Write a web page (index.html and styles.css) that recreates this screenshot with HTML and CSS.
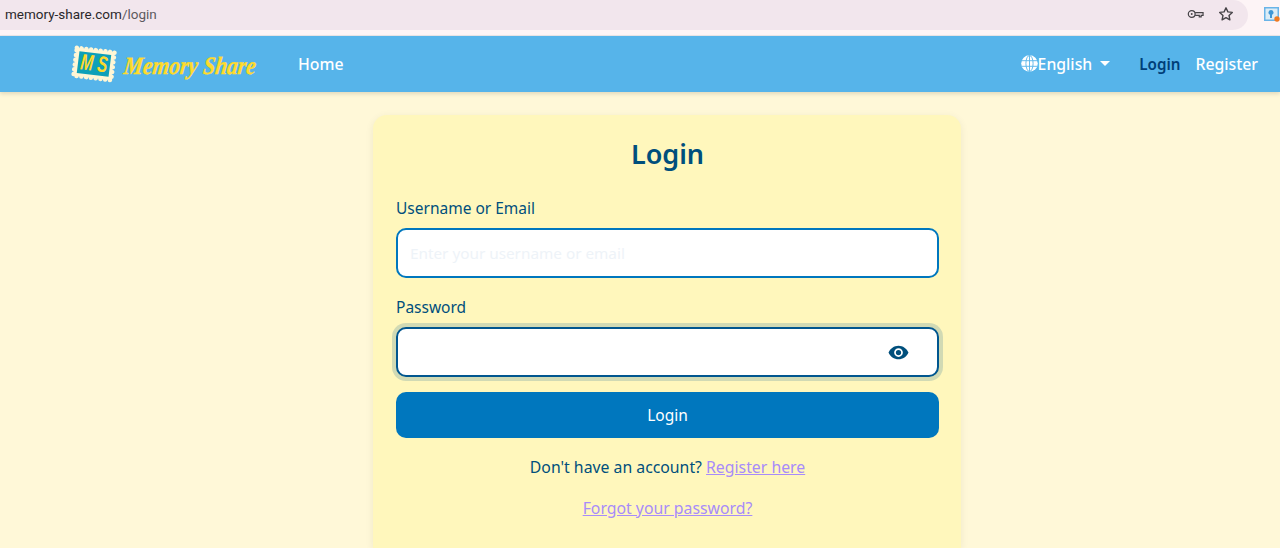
FILE: index.html
```html
<!DOCTYPE html>
<html lang="en">
<head>
  <meta charset="UTF-8">
  <title>Memory Share - Login</title>
  <link rel="stylesheet" href="styles.css">
</head>
<body>
<div class="browser-bar">
  <div class="url-pill">
    <span class="url"><span class="url-host">memory-share.com</span>/login</span>
    <svg class="key-icon" viewBox="0 0 18 10"><circle cx="5" cy="5" r="3.6"/><circle cx="5" cy="5" r="1" class="solid"/><path d="M8.6 3.6H17V6.4H15V8H13V6.4H8.6"/></svg>
    <svg class="star-icon" viewBox="0 0 16 16"><path d="M8 1.8l1.9 4.1 4.4.5-3.3 3 .9 4.4L8 11.6l-3.9 2.2.9-4.4-3.3-3 4.400-.5z"/></svg>
  </div>
  <svg class="ext-icon" viewBox="0 0 16 16">
    <rect width="15" height="14" y="1" fill="#69b4e8"/>
    <rect x="1.500" y="2.500" width="12" height="11" fill="#dcecf6"/>
    <path d="M7 4a2.500 2.500 0 0 1 1 4.800V12H6V8.800A2.500 2.500 0 0 1 7 4z" fill="#3f97d6"/>
    <circle cx="13" cy="13" r="2.700" fill="#f07a22"/>
  </svg>
</div>

<nav class="navbar">
  <a class="brand" href="#">
    <svg class="stamp" viewBox="0 0 46 40">
      <g transform="rotate(7 23 20)">
        <rect x="4" y="6" width="38" height="28" class="perf"/>
        <rect x="4" y="6" width="38" height="28" fill="#fff6d5"/>
        <rect x="7" y="9" width="32" height="22" fill="#0ea0b8"/>
        <text class="stamp-text" transform="translate(23 27) scale(.85 1.25)" text-anchor="middle">M S</text>
      </g>
    </svg>
    <span class="brand-name">Memory Share</span>
  </a>
  <a class="nav-link home" href="#">Home</a>
  <div class="nav-right">
    <a class="lang" href="#">
      <svg class="globe" viewBox="0 0 17 17"><circle cx="8.500" cy="8.500" r="8.300" class="globe-disc"/><ellipse cx="8.500" cy="8.500" rx="3.600" ry="8"/><path d="M.5 5.700h16M.5 11.300h16M8.500 .5v16"/></svg>
      <span>English</span>
      <span class="caret"></span>
    </a>
    <a class="nav-link active" href="#">Login</a>
    <a class="nav-link" href="#">Register</a>
  </div>
</nav>

<main class="page">
  <form class="login-card">
    <h1>Login</h1>
    <label for="username">Username or Email</label>
    <input id="username" class="field" type="text" placeholder="Enter your username or email">
    <label for="password">Password</label>
    <div class="password-wrap">
      <input id="password" class="field focused" type="password">
      <svg class="eye" viewBox="0 0 24 24"><path d="M12 4.200C7 4.200 2.500 7.400.6 12c1.900 4.600 6.400 7.800 11.400 7.800s9.500-3.200 11.400-7.800C21.500 7.400 17 4.200 12 4.200zm0 12.800a5 5 0 1 1 0-10 5 5 0 0 1 0 10zm0-8a3 3 0 1 0 0 6 3 3 0 0 0 0-6z"/></svg>
    </div>
    <button class="submit" type="button">Login</button>
    <p class="switch">Don't have an account? <a href="#">Register here</a></p>
    <p class="forgot"><a href="#">Forgot your password?</a></p>
  </form>
</main>
</body>
</html>
```

FILE: styles.css
```css
body {
  margin: 0;
  height: 548px;
  overflow: hidden;
  background: #fff8d8;
  color: #004f7c;
  font-family: "Noto Sans", Roboto, sans-serif;
  font-size: 16px;
}
a { text-decoration: none; }

.browser-bar {
  display: flex;
  align-items: flex-start;
  height: 35px;
  background: #fdf4f6;
  border-bottom: 1px solid #e9e6e8;
}
.url-pill {
  display: flex;
  align-items: center;
  width: 1248px;
  height: 30px;
  padding: 0 14px 2px 5px;
  box-sizing: border-box;
  background: #f2e6ed;
  border-radius: 0 15px 15px 0;
}
.url { flex: 1; font-size: 13.5px; color: #5d5a5e; font-family: Roboto, sans-serif; }
.url-host { color: #2a282b; }
.key-icon { width: 17px; height: 10px; fill: none; stroke: #474448; stroke-width: 1.3; margin-right: 14px; }
.key-icon .solid { fill: #474448; stroke: none; }
.star-icon { width: 16px; height: 16px; fill: none; stroke: #474448; stroke-width: 1.4; stroke-linejoin: round; }
.ext-icon { width: 16px; height: 16px; margin: 6px 0 0 16px; }

.navbar {
  display: flex;
  align-items: center;
  height: 56px;
  padding: 0 22px 1px 71px;
  box-sizing: border-box;
  background: #56b4ea;
  box-shadow: 0 2px 4px rgba(0, 0, 0, .12);
  position: relative;
}
.brand { display: flex; align-items: center; gap: 7px; }
.stamp { width: 46px; height: 40px; }
.perf { fill: none; stroke: #fff6d5; stroke-width: 4.500; stroke-linecap: round; stroke-dasharray: 0 4.800; }
.stamp-text { font: italic bold 18px "Liberation Sans", sans-serif; fill: #ffd92b; }
.brand-name {
  display: block;
  width: 133px;
  margin-top: 4px;
  font: italic bold 25px "Liberation Serif", serif;
  color: #ffdb2a;
  -webkit-text-stroke: .4px #ffdb2a;
  white-space: nowrap;
  transform: scaleX(.86) skewX(-8deg);
  transform-origin: left center;
}
.nav-link { color: #fff; font-size: 15.8px; font-weight: 500; }
.home { margin-left: 41px; }
.nav-right { display: flex; align-items: center; margin-left: auto; }
.nav-right .nav-link { margin-left: 15px; }
.nav-right .active { color: #003f78; font-size: 15.2px; font-weight: 600; margin-left: 29px; }
.lang { display: flex; align-items: center; color: #fff; font-size: 15.8px; font-weight: 500; }
.globe { width: 17px; height: 17px; fill: none; stroke: #56b4ea; stroke-width: .9; }
.globe-disc { fill: #fff; stroke: none; }
.caret {
  width: 0;
  height: 0;
  margin-left: 8px;
  border: 5px solid transparent;
  border-top-color: #fff;
  border-bottom: 0;
}

.page { display: flex; justify-content: center; height: 456px; padding: 23px 0 0 54px; box-sizing: border-box; }
.login-card {
  width: 588px;
  padding: 21px 22px 0 23px;
  box-sizing: border-box;
  background: #fff7bc;
  border-radius: 14px 14px 0 0;
  box-shadow: 0 2px 8px rgba(0, 0, 0, .07);
}
h1 {
  margin: 0 0 24px;
  text-align: center;
  font-size: 27px;
  line-height: 36px;
  font-weight: 600;
  color: #004f7c;
}
label { display: block; line-height: 24px; margin-bottom: 8px; font-size: 15.5px; }
.field {
  display: block;
  width: 100%;
  height: 50px;
  padding: 0 12px;
  box-sizing: border-box;
  border: 2px solid #0077be;
  border-radius: 10px;
  background: #fff;
  font: inherit;
  font-size: 15.3px;
  margin-bottom: 17px;
}
.field::placeholder { color: #eef3f8; opacity: 1; }
.focused {
  border-color: #00568f;
  box-shadow: 0 0 0 4px rgba(0, 86, 143, .18);
}
.password-wrap { position: relative; }
.eye { position: absolute; top: 15px; right: 30px; width: 21px; height: 21px; fill: #004f7c; }
.password-wrap .field { margin-bottom: 15px; }
.submit {
  display: block;
  width: 100%;
  height: 46px;
  border: 0;
  border-radius: 10px;
  background: #0077be;
  color: #fff;
  font: inherit;
  font-size: 15.5px;
  font-weight: 400;
}
.switch, .forgot { margin: 17px 0 0; text-align: center; line-height: 24px; font-size: 15.8px; }
.switch a, .forgot a { color: #a78bfa; text-decoration: underline; }
```
